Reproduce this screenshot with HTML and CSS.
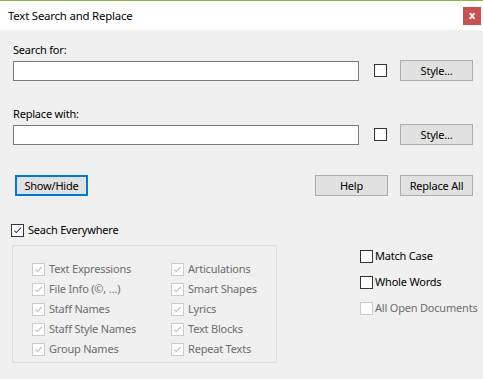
FILE: index.html
```html
<!DOCTYPE html>
<html lang="en">
<head>
  <meta charset="UTF-8" />
  <title>Text Search and Replace</title>
  <link rel="stylesheet" href="styles.css">
</head>
<body>

<div class="dialog">
  <header class="titlebar">
    <span class="title">Text Search and Replace</span>
    <div class="close">x</div>
  </header>

  <div class="content">
    <div class="label">Search for:</div>
    <div class="field-row">
      <input class="text-input" type="text" />
      <span class="box"></span>
      <button class="btn">Style...</button>
    </div>

    <div class="label second">Replace with:</div>
    <div class="field-row">
      <input class="text-input" type="text" />
      <span class="box"></span>
      <button class="btn">Style...</button>
    </div>

    <div class="button-row">
      <button class="btn focused">Show/Hide</button>
      <div class="spacer"></div>
      <button class="btn">Help</button>
      <button class="btn">Replace All</button>
    </div>

    <label class="check everywhere">
      <span class="box"><svg viewBox="0 0 13 13"><polyline points="2.5,6.5 5,9 10.5,3.5" /></svg></span>
      Seach Everywhere
    </label>

    <div class="lower">
      <div class="group">
        <div class="group-col first">
          <label class="check disabled"><span class="box"><svg viewBox="0 0 13 13"><polyline points="2.5,6.5 5,9 10.5,3.5" /></svg></span>Text Expressions</label>
          <label class="check disabled"><span class="box"><svg viewBox="0 0 13 13"><polyline points="2.5,6.5 5,9 10.5,3.5" /></svg></span>File Info (©, …)</label>
          <label class="check disabled"><span class="box"><svg viewBox="0 0 13 13"><polyline points="2.5,6.5 5,9 10.5,3.5" /></svg></span>Staff Names</label>
          <label class="check disabled"><span class="box"><svg viewBox="0 0 13 13"><polyline points="2.5,6.5 5,9 10.5,3.5" /></svg></span>Staff Style Names</label>
          <label class="check disabled"><span class="box"><svg viewBox="0 0 13 13"><polyline points="2.5,6.5 5,9 10.5,3.5" /></svg></span>Group Names</label>
        </div>
        <div class="group-col">
          <label class="check disabled"><span class="box"><svg viewBox="0 0 13 13"><polyline points="2.5,6.5 5,9 10.5,3.5" /></svg></span>Articulations</label>
          <label class="check disabled"><span class="box"><svg viewBox="0 0 13 13"><polyline points="2.5,6.5 5,9 10.5,3.5" /></svg></span>Smart Shapes</label>
          <label class="check disabled"><span class="box"><svg viewBox="0 0 13 13"><polyline points="2.5,6.5 5,9 10.5,3.5" /></svg></span>Lyrics</label>
          <label class="check disabled"><span class="box"><svg viewBox="0 0 13 13"><polyline points="2.5,6.5 5,9 10.5,3.5" /></svg></span>Text Blocks</label>
          <label class="check disabled"><span class="box"><svg viewBox="0 0 13 13"><polyline points="2.5,6.5 5,9 10.5,3.5" /></svg></span>Repeat Texts</label>
        </div>
      </div>

      <div class="options">
        <label class="check"><span class="box"></span>Match Case</label>
        <label class="check"><span class="box"></span>Whole Words</label>
        <label class="check disabled"><span class="box"></span>All Open Documents</label>
      </div>
    </div>
  </div>
</div>

</body>
</html>
```

FILE: styles.css
```css
body {
  margin: 0;
  font-family: "Noto Sans", Arial, sans-serif;
  font-size: 11px;
  letter-spacing: -0.2px;
  color: #000;
  background: #f0f0f0;
}
.dialog {
  width: 483px;
  height: 379px;
  background: #f0f0f0;
}
.titlebar {
  height: 29px;
  background: #fff;
  border-top: 1px solid #8ab83c;
  display: flex;
  align-items: center;
  justify-content: space-between;
  padding: 0 2px 0 8px;
}
.title {
  font-size: 11.4px;
  margin-top: -1px;
}
.close {
  width: 18px;
  height: 18px;
  background: #c75050;
  color: #fff;
  font-weight: bold;
  font-size: 11px;
  line-height: 16px;
  text-align: center;
}
.content {
  padding: 12px 10px 0 13px;
}
.label {
  line-height: 16px;
  height: 16px;
}
.label.second {
  margin-top: 25px;
}
.field-row {
  display: flex;
  align-items: flex-start;
  margin-top: 2px;
  height: 21px;
}
.text-input {
  box-sizing: border-box;
  width: 346px;
  height: 20px;
  margin: 1px 0 0 0;
  border: 1px solid #7a7a7a;
  background: #fff;
  padding: 0 3px;
  font: inherit;
}
.box {
  box-sizing: border-box;
  width: 13px;
  height: 13px;
  border: 1px solid #333;
  background: #fff;
  display: inline-flex;
  flex: none;
}
.box svg {
  width: 11px;
  height: 11px;
}
.box polyline {
  fill: none;
  stroke: #333;
  stroke-width: 1.2;
}
.field-row .box {
  margin: 4px 0 0 15px;
}
.btn {
  box-sizing: border-box;
  height: 21px;
  width: 73px;
  background: #e1e1e1;
  border: 1px solid #adadad;
  font: inherit;
  letter-spacing: inherit;
  color: #000;
  padding: 0;
}
.field-row .btn {
  margin-left: 13px;
}
.button-row {
  display: flex;
  margin-top: 30px;
  width: 460px;
}
.btn.focused {
  border: 2px solid #0078d7;
  margin-left: 2px;
}
.button-row .btn + .btn {
  margin-left: 12px;
}
.spacer {
  flex: 1;
}
.check {
  display: flex;
  align-items: center;
  gap: 4px;
  height: 16px;
  line-height: 16px;
  white-space: nowrap;
}
.everywhere {
  margin: 26px 0 0 -2px;
}
.lower {
  display: flex;
  margin-top: 7px;
}
.group {
  box-sizing: border-box;
  flex: none;
  width: 265px;
  height: 118px;
  margin-left: -1px;
  border: 1px solid #dcdcdc;
  display: flex;
  padding: 15px 0 0 19px;
}
.group-col {
  display: flex;
  flex-direction: column;
  gap: 4px;
}
.group-col.first {
  flex: none;
  width: 139px;
}
.check.disabled {
  color: #6d6d6d;
}
.check.disabled .box {
  border-color: #cccccc;
  background: #fff;
}
.check.disabled polyline {
  stroke: #b8b8b8;
}
.options {
  display: flex;
  flex-direction: column;
  gap: 10px;
  margin: 3px 0 0 83px;
}
.options .check {
  gap: 2px;
}
```
